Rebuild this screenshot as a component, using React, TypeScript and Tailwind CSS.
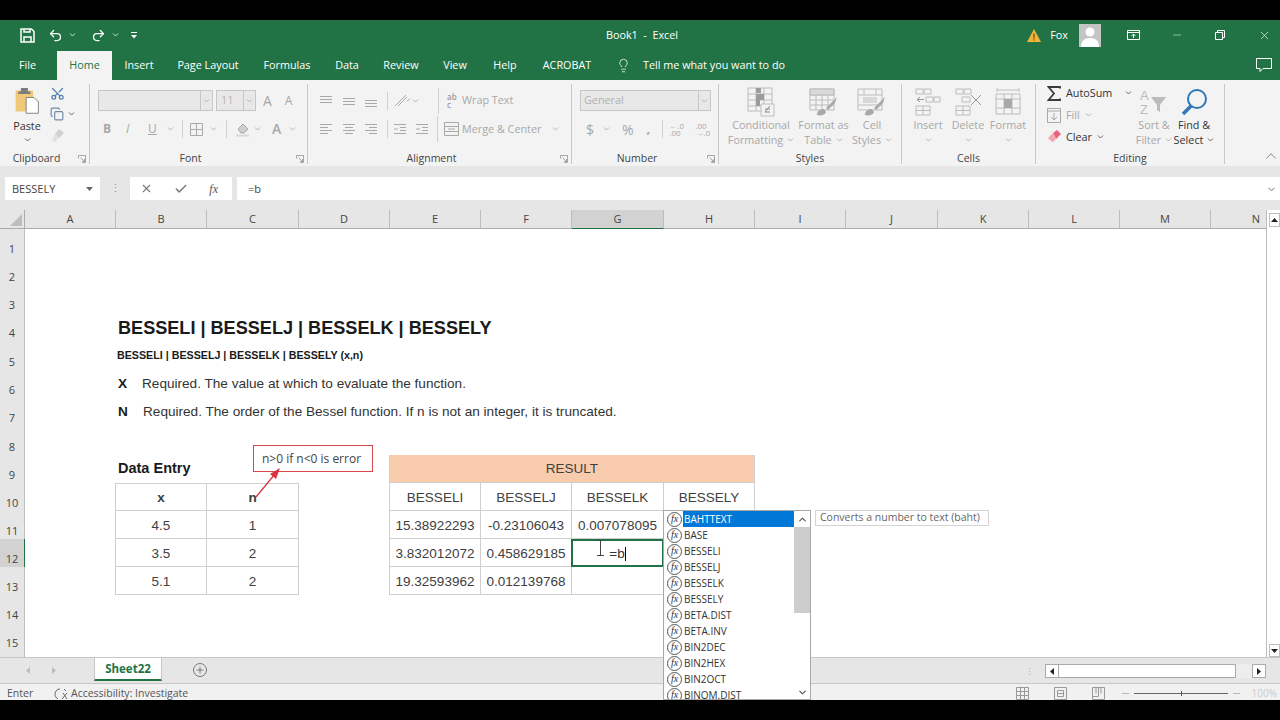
import type { ReactNode } from 'react';
import { Check, ChevronDown, ChevronUp, Copy, Lightbulb, Minus, Plus, Redo2, Scissors, Undo2, X } from 'lucide-react';

const columns = ['A', 'B', 'C', 'D', 'E', 'F', 'G', 'H', 'I', 'J', 'K', 'L', 'M', 'N'];
const functions = ['BAHTTEXT', 'BASE', 'BESSELI', 'BESSELJ', 'BESSELK', 'BESSELY', 'BETA.DIST', 'BETA.INV', 'BIN2DEC', 'BIN2HEX', 'BIN2OCT', 'BINOM.DIST'];
const ui = "font-['Open_Sans',sans-serif]";
const sheetFont = "font-['Liberation_Sans',sans-serif]";

function Caret({ className = 'text-[#b4b4b4]' }: { className?: string }) {
  return (
    <svg width="7" height="4" viewBox="0 0 7 4" className={className} fill="none" stroke="currentColor">
      <path d="M1 .5 3.500 3 6 .5" />
    </svg>
  );
}

function Group({ label, width, launcher, children }: { label: string; width: string; launcher?: boolean; children: ReactNode }) {
  return (
    <div className={`${width} flex h-[80px] flex-col border-r border-[#c8c8c8]`}>
      <div className="flex h-[68px] min-h-0">{children}</div>
      <div className={`relative flex flex-1 items-center justify-center text-[10.500px] leading-none text-[#444] ${launcher ? 'pr-4' : ''}`}>
        {label}
        {launcher && (
          <svg width="8" height="8" viewBox="0 0 9 9" className="absolute right-[3px] top-[3px] text-[#999]" fill="none" stroke="currentColor">
            <path d="M.5 4V.5H8.500V8.500H5M3 3 7.500 7.500M7.500 4.500V7.500H4.500" />
          </svg>
        )}
      </div>
    </div>
  );
}

function LargeButton({ lines, width, dim = true, children }: { lines: ReactNode[]; width: string; dim?: boolean; children: ReactNode }) {
  return (
    <div className={`${width} flex flex-col items-center text-[10.800px] leading-[15px] ${dim ? 'text-[#a8a8a8]' : 'text-[#333]'}`}>
      <div className="flex h-[31px] items-center">{children}</div>
      {lines.map((line, i) => (
        <div key={i} className="flex h-[15px] items-center gap-1 whitespace-nowrap">
          {line}
        </div>
      ))}
    </div>
  );
}

function Lines({ rows }: { rows: string[] }) {
  return (
    <svg width="14" height="12" viewBox="0 0 14 12" fill="none" stroke="#a9a9a9">
      {rows.map((d) => (
        <path key={d} d={d} />
      ))}
    </svg>
  );
}

function CellsIcon({ children }: { children: ReactNode }) {
  return (
    <svg width="28" height="30" viewBox="0 0 28 30" fill="none" stroke="#bcbcbc">
      {children}
    </svg>
  );
}

function Ribbon() {
  return (
    <div className={`${ui} flex h-[86px] bg-[#f3f3f3] pt-1`}>
      <Group label="Clipboard" width="w-[90px]" launcher>
        <div className="flex w-[50px] flex-col items-center pl-1 pt-[3px] text-[10.800px] leading-[15px] text-[#333]">
          <svg width="26" height="28" viewBox="0 0 28 32">
            <path d="M1 4h20v24H1z" fill="#efc878" />
            <path d="M7 1h8v4h3v3H4V5h3z" fill="#7c7c7c" />
            <path d="M13 12h9l5 5v13H13z" fill="#fff" stroke="#777" />
          </svg>
          <span className="mt-[3px]">Paste</span>
          <Caret className="mt-[5px] text-[#666]" />
        </div>
        <div className="flex flex-col gap-[6px] pt-[2px]">
          <Scissors size={15} className="-rotate-90 text-[#4f7fae]" />
          <div className="flex items-center gap-1">
            <Copy size={14} className="text-[#6f8ba6]" />
            <Caret className="text-[#666]" />
          </div>
          <svg width="16" height="16" viewBox="0 0 16 16">
            <path d="M9 2l5 4-5 5-4-4z" fill="#d0d0d0" />
            <path d="M5 7l4 4-4 4-3-2z" fill="#e0e0e0" />
          </svg>
        </div>
      </Group>

      <Group label="Font" width="w-[218px]" launcher>
        <div className="flex flex-col pl-2 pt-[6px]">
          <div className="flex items-center gap-[3px]">
            <div className="flex h-[21px] w-[115px] justify-end border border-[#c6c6c6] bg-[#e8e8e8]">
              <div className="flex w-3 items-center justify-center border-l border-[#c6c6c6]">
                <Caret />
              </div>
            </div>
            <div className="flex h-[21px] w-10 items-center justify-between border border-[#c6c6c6] bg-[#e8e8e8] pl-1 text-[11px] text-[#b5b5b5]">
              11
              <div className="flex h-full w-3 items-center justify-center border-l border-[#c6c6c6]">
                <Caret />
              </div>
            </div>
            <span className="ml-[4px] text-[14px] leading-none text-[#a5a5a5]">A</span>
            <span className="ml-[10px] text-[12px] leading-none text-[#a5a5a5]">A</span>
          </div>
          <div className="mt-[8px] flex h-[20px] items-center text-[12px] text-[#a8a8a8]">
            <span className="ml-[5px] w-[23px] font-bold">B</span>
            <span className="w-[22px] italic">I</span>
            <span className="w-[19px] underline">U</span>
            <Caret />
            <div className="ml-[8px] mr-[7px] h-[18px] w-px bg-[#d0d0d0]" />
            <svg width="13" height="13" viewBox="0 0 13 13" fill="none" stroke="#aaa">
              <path d="M.5.500h12v12H.5zM6.500.500v12M.5 6.500h12" />
            </svg>
            <Caret className="ml-[7px] text-[#b4b4b4]" />
            <div className="ml-[9px] mr-[8px] h-[18px] w-px bg-[#d0d0d0]" />
            <svg width="16" height="15" viewBox="0 0 16 15">
              <path d="M3 7l5-5 5 5-4 4H6z" fill="#cfcfcf" stroke="#a9a9a9" />
              <path d="M1 13.500h13" stroke="#d9d9d9" strokeWidth="2" />
            </svg>
            <Caret className="ml-[3px] text-[#b4b4b4]" />
            <span className="ml-[11px] text-[14px] font-semibold leading-none">A</span>
            <Caret className="ml-[8px] text-[#b4b4b4]" />
          </div>
        </div>
      </Group>

      <Group label="Alignment" width="w-[264px]" launcher>
        <div className="flex flex-col pl-[7px] pt-[6px]">
          <div className="flex h-[21px] items-center">
            <div className="flex w-[22px] justify-center"><Lines rows={['M1 1.500h12M1 4.500h12M1 7.500h12']} /></div>
            <div className="flex w-[23px] justify-center"><Lines rows={['M1 3.500h12M1 6.500h12M1 9.500h12']} /></div>
            <div className="flex w-[22px] justify-center"><Lines rows={['M1 5.500h12M1 8.500h12M1 11.500h12']} /></div>
            <div className="mx-[5px] h-[18px] w-px bg-[#d0d0d0]" />
            <svg width="18" height="16" viewBox="0 0 18 16" fill="none" stroke="#a9a9a9">
              <path d="M2 13 13 2M5 13l9-9M14 8l3-2" />
            </svg>
            <Caret className="ml-[1px] text-[#b4b4b4]" />
            <div className="ml-[19px] mr-2 h-[26px] w-px bg-[#d0d0d0]" />
            <span className="flex items-center gap-[3px] text-[10.800px] text-[#a8a8a8]">
              <span className="w-[12px] text-[8px] font-semibold leading-[8px] text-[#9a9a9a]">ab c</span>
              Wrap Text
            </span>
          </div>
          <div className="mt-[8px] flex h-[20px] items-center">
            <div className="flex w-[22px] justify-center"><Lines rows={['M1 1.500h12M1 4.500h8M1 7.500h12M1 10.500h8']} /></div>
            <div className="flex w-[23px] justify-center"><Lines rows={['M1 1.500h12M3 4.500h8M1 7.500h12M3 10.500h8']} /></div>
            <div className="flex w-[22px] justify-center"><Lines rows={['M1 1.500h12M5 4.500h8M1 7.500h12M5 10.500h8']} /></div>
            <div className="mx-[5px] h-[18px] w-px bg-[#d0d0d0]" />
            <div className="flex gap-2">
              <Lines rows={['M1 1.500h12M7 4.500h6M7 7.500h6M1 10.500h12M1 6h4']} />
              <Lines rows={['M1 1.500h12M7 4.500h6M7 7.500h6M1 10.500h12M5 6H1']} />
            </div>
            <div className="ml-[8px] mr-[6px] h-[26px] w-px bg-[#d0d0d0]" />
            <span className="flex items-center gap-[3px] whitespace-nowrap text-[10.800px] text-[#a8a8a8]">
              <svg width="15" height="14" viewBox="0 0 15 14" fill="none" stroke="#a9a9a9">
                <path d="M.5.500h14v13H.5zM.5 4.500h14M.5 9.500h14M4 7h7" />
              </svg>
              Merge &amp; Center
              <Caret className="ml-2 text-[#b4b4b4]" />
            </span>
          </div>
        </div>
      </Group>

      <Group label="Number" width="w-[147px]" launcher>
        <div className="flex flex-col pl-2 pt-[6px]">
          <div className="flex h-[21px] w-[131px] items-center justify-between border border-[#c6c6c6] bg-[#e8e8e8] pl-[3px] text-[10.800px] text-[#b0b0b0]">
            General
            <div className="flex h-full w-3 items-center justify-center border-l border-[#c6c6c6]">
              <Caret />
            </div>
          </div>
          <div className="mt-[8px] flex h-[20px] items-center text-[#a8a8a8]">
            <span className="ml-[6px] text-[14px]">$</span>
            <Caret className="ml-[9px] text-[#b4b4b4]" />
            <span className="ml-[12px] text-[14px]">%</span>
            <span className="ml-[13px] text-[13px] font-bold">,</span>
            <div className="ml-[12px] mr-[6px] h-[18px] w-px bg-[#d0d0d0]" />
            <span className="w-[16px] text-[8px] leading-[7px]">←.0 .00</span>
            <span className="ml-[10px] w-[14px] text-[8px] leading-[7px]">.00 →.0</span>
          </div>
        </div>
      </Group>

      <Group label="Styles" width="w-[183px]">
        <div className="flex pl-[10px] pt-[2px]">
          <LargeButton width="w-[64px]" lines={['Conditional', <>Formatting <Caret /></>]}>
            <svg width="28" height="30" viewBox="0 0 28 30" fill="none" stroke="#bcbcbc">
              <path d="M1 1h24v23H1zM1 7h24M1 13h24M1 19h24M9 1v23M17 1v23" />
              <path d="M9 1h5v5H9zM9 7h8v6H9zM9 13h4v6H9z" fill="#9c9c9c" stroke="none" />
              <path d="M14 17h13v12H14z" fill="#f3f3f3" />
              <path d="M18 25l5-6M18 22h5M18 25h5" stroke="#888" />
            </svg>
          </LargeButton>
          <LargeButton width="w-[61px]" lines={['Format as', <>Table <Caret /></>]}>
            <svg width="30" height="30" viewBox="0 0 30 30" fill="none" stroke="#bcbcbc">
              <path d="M1 2h24v21H1zM1 8h24M1 13h24M1 18h24M7 2v21M13 2v21M19 2v21" />
              <path d="M1 2h24v6H1z" fill="#d8d8d8" />
              <path d="M8 28c0-4 3-6 7-6l2 3c-1 3-5 4-9 3zM17 21l11-11-2 6-7 7z" fill="#a8a8a8" stroke="none" />
            </svg>
          </LargeButton>
          <LargeButton width="w-[36px]" lines={['Cell', <>Styles <Caret /></>]}>
            <svg width="30" height="30" viewBox="0 0 30 30" fill="none" stroke="#bcbcbc">
              <path d="M1 2h24v21H1zM1 8h24M1 18h24M7 2v6M19 2v6" />
              <path d="M6 10h14v6H6z" fill="#d8d8d8" stroke="none" />
              <path d="M8 28c0-4 3-6 7-6l2 3c-1 3-5 4-9 3zM17 21l11-11-2 6-7 7z" fill="#a8a8a8" stroke="none" />
            </svg>
          </LargeButton>
        </div>
      </Group>

      <Group label="Cells" width="w-[134px]">
        <div className="flex pl-[6px] pt-[2px]">
          <LargeButton width="w-[40px]" lines={['Insert', <Caret />]}>
            <CellsIcon>
              <path d="M2 2h7v5H2zM10 2h7v5h-7zM12 10h7v5h-7zM20 10h6v5h-6zM2 19h14v9H2zM9 19v9M2 23.500h14" />
              <path d="M10 12.500H3M6 10l-3 2.500L6 15" stroke="#999" />
            </CellsIcon>
          </LargeButton>
          <LargeButton width="w-[40px]" lines={['Delete', <Caret />]}>
            <CellsIcon>
              <path d="M2 2h7v5H2zM10 2h7v5h-7zM8 10h8v5H8zM2 19h14v9H2zM9 19v9M2 23.500h14" />
              <path d="m17 8 10 10M27 8 17 18" stroke="#999" />
            </CellsIcon>
          </LargeButton>
          <LargeButton width="w-[40px]" lines={['Format', <Caret />]}>
            <CellsIcon>
              <path d="M2 7h24v20H2zM2 12h24M2 21h24M10 7v20M18 7v20M3 3h22M3 1v4M25 1v4" />
              <path d="M10 12h8v9h-8z" fill="#a8a8a8" stroke="none" />
            </CellsIcon>
          </LargeButton>
        </div>
      </Group>

      <Group label="Editing" width="w-[189px]">
        <div className="flex pl-[11px] pt-[2px]">
          <div className="-mt-[4px] flex w-[92px] flex-col text-[10.800px] leading-none">
            <div className="flex h-[22px] items-center gap-[5px] text-[#333]">
              <svg width="14" height="15" viewBox="0 0 14 15" fill="none" stroke="#3a3a3a" strokeWidth="1.800">
                <path d="M13 2.500V1H1.500l5.500 6.500L1.500 14H13v-1.500" />
              </svg>
              AutoSum
              <Caret className="ml-2 text-[#666]" />
            </div>
            <div className="flex h-[22px] items-center gap-[5px] text-[#a8a8a8]">
              <svg width="14" height="15" viewBox="0 0 14 15" fill="none" stroke="#a9a9a9">
                <path d="M.5.500h13v14H.5zM.5 3h13M7 5v7M4 9l3 3 3-3" />
              </svg>
              Fill <Caret />
            </div>
            <div className="flex h-[22px] items-center gap-[5px] text-[#333]">
              <svg width="14" height="14" viewBox="0 0 14 14">
                <path d="M6 3 10 0l4 4-5 5z" fill="#e8657f" />
                <path d="M6 3 9 9l-3 3-2-1-3-3z" fill="#f3a8b6" />
              </svg>
              Clear <Caret className="text-[#666]" />
            </div>
          </div>
          <div className="-ml-[5px] w-[40px]">
            <LargeButton width="w-[40px]" lines={['Sort &', <>Filter <Caret /></>]}>
              <svg width="30" height="28" viewBox="0 0 30 28" fill="#bcbcbc">
                <text x="1" y="12" fontSize="13" fontFamily="Liberation Sans">A</text>
                <text x="1" y="26" fontSize="13" fontFamily="Liberation Sans">Z</text>
                <path d="M12 9h15l-6 8v7l-3-2v-5z" />
              </svg>
            </LargeButton>
          </div>
          <LargeButton width="w-[40px]" dim={false} lines={['Find &', <>Select <Caret className="text-[#666]" /></>]}>
            <svg width="28" height="28" viewBox="0 0 28 28" fill="none">
              <circle cx="17" cy="11" r="9" stroke="#2f78b7" strokeWidth="2" />
              <path d="M11 18 3 26" stroke="#2f78b7" strokeWidth="3.500" />
            </svg>
          </LargeButton>
        </div>
      </Group>

      <div className="flex flex-1 items-end justify-end pb-[1px]">
        <ChevronUp size={18} strokeWidth={1} className="text-[#666]" />
      </div>
    </div>
  );
}

function Header() {
  const tabs: [string, string][] = [
    ['Insert', 'w-[54px]'],
    ['Page Layout', 'w-[84px]'],
    ['Formulas', 'w-[74px]'],
    ['Data', 'w-[46px]'],
    ['Review', 'w-[62px]'],
    ['View', 'w-[46px]'],
    ['Help', 'w-[54px]'],
    ['ACROBAT', 'w-[70px]'],
  ];
  return (
    <div className={`${ui} bg-[#217346] text-white`}>
      <div className="grid h-[30px] grid-cols-[1fr_auto_1fr] items-center text-[10.800px]">
        <div className="flex items-center pl-5">
          <svg width="15" height="15" viewBox="0 0 15 15" fill="none" stroke="#fff" strokeWidth="1.500">
            <path d="M1 1h10.500L14 3.500V14H1zM4 14V9h7v5M4 1v3h6V1" />
          </svg>
          <Undo2 size={15} className="ml-[13px]" />
          <Caret className="ml-[6px] text-[#cfe3d8]" />
          <Redo2 size={15} className="ml-[15px]" />
          <Caret className="ml-[6px] text-[#cfe3d8]" />
          <svg width="6" height="7" viewBox="0 0 6 7" fill="#fff" className="ml-[12px]">
            <path d="M0 0h6v1H0zM0 3h6L3 6.500z" />
          </svg>
        </div>
        <div className="whitespace-pre pl-1">Book1  -  Excel</div>
        <div className="flex items-center justify-end">
          <svg width="14" height="13" viewBox="0 0 14 13" className="mr-[9px]">
            <path d="M7 0l7 13H0z" fill="#f0b33c" />
            <path d="M6.400 4.500h1.200v5H6.400zM6.400 10.300h1.200v1.300H6.400z" fill="#6b4a0c" />
          </svg>
          <span>Fox</span>
          <svg width="22" height="23" viewBox="0 0 22 23" className="ml-[11px]">
            <path d="M0 0h22v23H0z" fill="#c4c4c4" />
            <circle cx="11" cy="8" r="4.500" fill="#fff" />
            <path d="M2 23c0-7 4-9 9-9s9 2 9 9z" fill="#fff" />
          </svg>
          <svg width="13" height="10" viewBox="0 0 13 10" fill="none" stroke="#fff" className="ml-[26px]">
            <path d="M.5.500h12v9H.5zM.5 2.500h12M6.500 8V4M4.500 6l2-2 2 2" />
          </svg>
          <Minus size={12} strokeWidth={1} className="ml-[31px]" />
          <svg width="10" height="10" viewBox="0 0 10 10" fill="none" stroke="#fff" className="ml-[32px]">
            <path d="M.5 2.500h7v7h-7zM2.500 2.500v-2h7v7h-2" />
          </svg>
          <X size={13} strokeWidth={1.200} className="ml-[33px] mr-[9px]" />
        </div>
      </div>
      <div className="flex h-[30px] items-center text-[10.800px]">
        <div className="flex h-full items-center">
          <div className="mr-[2px] flex w-[55px] justify-center">File</div>
          <div className="flex h-[29px] w-[55px] items-center justify-center self-end bg-[#f3f3f3] text-[#217346]">Home</div>
          {tabs.map(([name, width]) => (
            <div key={name} className={`${width} flex justify-center`}>
              {name}
            </div>
          ))}
        </div>
        <Lightbulb size={15} strokeWidth={1.200} className="ml-[14px]" />
        <span className="ml-[12px]">Tell me what you want to do</span>
        <svg width="16" height="14" viewBox="0 0 16 14" fill="none" stroke="#fff" className="ml-auto mr-2">
          <path d="M.5.500h15v10H7l-3 3v-3H.5z" />
        </svg>
      </div>
    </div>
  );
}

function FormulaBar() {
  return (
    <div className={`${ui} flex h-[44px] flex-col bg-[#e6e6e6] pt-[11px]`}>
      <div className="flex h-[23px] items-stretch text-[11px] text-[#444]">
        <div className="ml-[5px] flex w-[95px] items-center justify-between bg-white pl-[7px] pr-[7px] pt-[1px]">
          BESSELY
          <svg width="7" height="4" viewBox="0 0 7 4" fill="#666">
            <path d="M0 0h7L3.500 4z" />
          </svg>
        </div>
        <div className="flex w-[30px] items-center justify-center text-[#999]">⋮</div>
        <div className="flex w-[102px] items-center justify-between bg-white pl-[10px] pr-[14px]">
          <X size={13} className="text-[#777]" />
          <Check size={14} strokeWidth={2.500} className="text-[#777]" />
          <span className="font-['Liberation_Serif',serif] text-[12px] italic text-[#555]">fx</span>
        </div>
        <div className="ml-[5px] flex flex-1 items-center justify-between bg-white pl-[11px] pr-[3px] pt-[1px]">
          =b
          <ChevronDown size={11} strokeWidth={2} className="text-[#666]" />
        </div>
      </div>
    </div>
  );
}

function Blank({ count }: { count: number }) {
  return (
    <>
      {Array.from({ length: count }, (_, i) => (
        <div key={i} />
      ))}
    </>
  );
}

function RowLabel({ n }: { n?: number }) {
  const active = n === 12;
  return (
    <div className={`${ui} flex items-end justify-center overflow-hidden border-r pb-[1px] text-[11px] leading-[15px] text-[#444] ${active ? 'border-[#217346] bg-[#d2d2d2]' : 'border-[#bdbdbd] bg-[#e6e6e6]'}`}>
      {n}
    </div>
  );
}

function Cell({ children, className = 'pt-[3px]' }: { children?: ReactNode; className?: string }) {
  return <div className={`flex items-center justify-center border-b border-r border-[#cfcfcf] text-[13.500px] text-[#404040] ${className}`}>{children}</div>;
}

function TextCell({ children, className = '' }: { children: ReactNode; className?: string }) {
  return <div className={`flex items-center whitespace-nowrap text-[#1a1a1a] ${className}`}>{children}</div>;
}

function Sheet() {
  const first = '-ml-px border-l pt-[3px]';
  return (
    <div className={`${sheetFont} grid h-[447px] w-[1266px] grid-cols-[25px_91px_91px_92px_91px_91px_91px_92px_91px_91px_92px_91px_91px_91px_91px] grid-rows-[19px_28px_28px_28px_28px_29px_28px_28px_29px_repeat(7,28px)_6px] overflow-hidden bg-white`}>
      <div className="flex items-end justify-end border-b border-r border-[#ababab] bg-[#e6e6e6]">
        <svg width="12" height="12" viewBox="0 0 12 12" fill="#bdbdbd" className="mb-[2px] mr-[2px]">
          <path d="M12 0v12H0z" />
        </svg>
      </div>
      {columns.map((c) => (
        <div
          key={c}
          className={`${ui} flex items-center justify-center border-b border-r text-[11px] text-[#444] ${c === 'G' ? 'border-b-[#217346] border-r-[#bdbdbd] bg-[#d2d2d2]' : 'border-b-[#ababab] border-r-[#bdbdbd] bg-[#e6e6e6]'}`}
        >
          {c}
        </div>
      ))}

      {[1, 2, 3].map((n) => (
        <div key={n} className="contents">
          <RowLabel n={n} />
          <Blank count={14} />
        </div>
      ))}

      <RowLabel n={4} />
      <Blank count={1} />
      <TextCell className="pl-[2px] pt-[3px] text-[18.100px] font-bold">BESSELI | BESSELJ | BESSELK | BESSELY</TextCell>
      <Blank count={12} />

      <RowLabel n={5} />
      <Blank count={1} />
      <TextCell className="pl-[1px] text-[10.700px] font-bold">BESSELI | BESSELJ | BESSELK | BESSELY (x,n)</TextCell>
      <Blank count={12} />

      <RowLabel n={6} />
      <Blank count={1} />
      <TextCell className="pl-[2px] pt-[1px] text-[13.600px]">
        <b className="w-[24px] shrink-0">X</b>
        <span className="text-[#333]">Required. The value at which to evaluate the function.</span>
      </TextCell>
      <Blank count={12} />

      <RowLabel n={7} />
      <Blank count={1} />
      <TextCell className="pl-[2px] pt-[1px] text-[13.600px]">
        <b className="w-[25px] shrink-0">N</b>
        <span className="text-[#333]">Required. The order of the Bessel function. If n is not an integer, it is truncated.</span>
      </TextCell>
      <Blank count={12} />

      <RowLabel n={8} />
      <Blank count={14} />

      <RowLabel n={9} />
      <Blank count={1} />
      <TextCell className="pl-[2px] text-[14.500px] font-bold">Data Entry</TextCell>
      <Blank count={2} />
      <Cell className="col-span-4 -ml-px border-l bg-[#f8cbad] pt-[1px]">RESULT</Cell>
      <Blank count={6} />

      <RowLabel n={10} />
      <Blank count={1} />
      <Cell className={`${first} border-t font-bold text-[#1a1a1a]`}>x</Cell>
      <Cell className="border-t pt-[3px] font-bold text-[#1a1a1a]">n</Cell>
      <Blank count={1} />
      <Cell className={first}>BESSELI</Cell>
      <Cell>BESSELJ</Cell>
      <Cell>BESSELK</Cell>
      <Cell>BESSELY</Cell>
      <Blank count={6} />

      <RowLabel n={11} />
      <Blank count={1} />
      <Cell className={first}>4.5</Cell>
      <Cell>1</Cell>
      <Blank count={1} />
      <Cell className={first}>15.38922293</Cell>
      <Cell>-0.23106043</Cell>
      <Cell>0.007078095</Cell>
      <Cell />
      <Blank count={6} />

      <RowLabel n={12} />
      <Blank count={1} />
      <Cell className={first}>3.5</Cell>
      <Cell>2</Cell>
      <Blank count={1} />
      <Cell className={first}>3.832012072</Cell>
      <Cell>0.458629185</Cell>
      <div className="-ml-px flex items-center justify-center border-2 border-[#217346] pt-[2px] text-[13.500px] text-[#333]">
        =b
        <span className="h-[14px] w-px bg-black" />
      </div>
      <Cell />
      <Blank count={6} />

      <RowLabel n={13} />
      <Blank count={1} />
      <Cell className={first}>5.1</Cell>
      <Cell>2</Cell>
      <Blank count={1} />
      <Cell className={first}>19.32593962</Cell>
      <Cell>0.012139768</Cell>
      <Cell />
      <Cell />
      <Blank count={6} />

      {[14, 15].map((n) => (
        <div key={n} className="contents">
          <RowLabel n={n} />
          <Blank count={14} />
        </div>
      ))}
      <RowLabel />
      <Blank count={14} />
    </div>
  );
}

function VerticalScroll() {
  return (
    <div className="flex h-[447px] w-[14px] flex-col border-l border-[#bdbdbd] bg-white pl-[2px] pt-[3px]">
      <div className="flex h-[14px] items-center justify-center border border-[#bdbdbd]">
        <svg width="7" height="4" viewBox="0 0 7 4" fill="#222"><path d="M3.500 0 7 4H0z" /></svg>
      </div>
      <div className="flex-1" />
      <div className="flex h-[13px] items-center justify-center border border-[#bdbdbd]">
        <svg width="7" height="4" viewBox="0 0 7 4" fill="#222"><path d="M0 0h7L3.500 4z" /></svg>
      </div>
    </div>
  );
}

function SheetTabs() {
  return (
    <div className={`${ui} flex h-[27px] items-start border-y border-[#c6c6c6] bg-[#e6e6e6] text-[#bcbcbc]`}>
      <div className="flex h-[25px] w-[94px] items-center gap-[22px] pl-[26px]">
        <svg width="4" height="7" viewBox="0 0 4 7" fill="currentColor"><path d="M4 0v7L0 3.500z" /></svg>
        <svg width="4" height="7" viewBox="0 0 4 7" fill="currentColor"><path d="M0 0v7l4-3.500z" /></svg>
      </div>
      <div className="flex h-[23px] w-[68px] items-center justify-center border-x border-b-2 border-x-[#c6c6c6] border-b-[#217346] bg-white pt-[1px] text-[11.500px] font-bold text-[#217346]">Sheet22</div>
      <div className="ml-[31px] mt-[5px] flex h-[14px] w-[14px] items-center justify-center rounded-full border border-[#777]">
        <Plus size={10} className="text-[#666]" />
      </div>
      <div className="ml-auto mt-[6px] flex items-center pr-[14px]">
        <span className="mr-[11px] text-[9px] leading-none text-[#aaa]">⋮</span>
        <div className="flex h-[14px] w-[14px] items-center justify-center border border-[#aaa] bg-white">
          <svg width="4" height="7" viewBox="0 0 4 7" fill="#222"><path d="M4 0v7L0 3.500z" /></svg>
        </div>
        <div className="h-[14px] w-[177px] border-y border-r border-[#aaa] bg-white" />
        <div className="h-[14px] w-[16px] bg-[#ededed]" />
        <div className="flex h-[14px] w-[14px] items-center justify-center border border-[#aaa] bg-white">
          <svg width="4" height="7" viewBox="0 0 4 7" fill="#222"><path d="M0 0v7l4-3.500z" /></svg>
        </div>
      </div>
    </div>
  );
}

function StatusBar() {
  return (
    <div className={`${ui} flex h-[16px] items-center bg-[#f1f1f1] pl-[7px] pt-[3px] text-[10.500px] text-[#555]`}>
      <span className="w-[46px]">Enter</span>
      <svg width="15" height="14" viewBox="0 0 15 14" fill="none" stroke="#666">
        <path d="M7 2a5 5 0 0 0-5 5c0 2 1 4 3 5M10 6l4 6M14 6l-5 6M11 2l2 2" />
      </svg>
      <span className="ml-[3px]">Accessibility: Investigate</span>
      <div className="ml-auto flex items-center">
        <svg width="13" height="13" viewBox="0 0 13 13" fill="none" stroke="#999">
          <path d="M.5.500h12v12H.5zM4.500.500v12M8.500.500v12M.5 4.500h12M.5 8.500h12" />
        </svg>
        <svg width="13" height="13" viewBox="0 0 13 13" fill="none" stroke="#999" className="ml-[25px]">
          <path d="M.5.500h12v12H.5zM3.500 3.500h6v6h-6zM4 6.500h5" />
        </svg>
        <svg width="13" height="13" viewBox="0 0 13 13" fill="none" stroke="#999" className="ml-[25px]">
          <path d="M.5.500h12v12H.5zM.5 9.500h6v-9M4 .500v6M9 .500v6" />
        </svg>
        <div className="ml-[17px] h-px w-[7px] bg-[#bbb]" />
        <div className="relative ml-[5px] h-px w-[94px] bg-[#666]">
          <div className="absolute left-[47px] top-[-2px] h-[5px] w-px bg-[#555]" />
        </div>
        <div className="ml-[5px] h-px w-[7px] bg-[#bbb]" />
        <span className="ml-[12px] mr-[3px] text-[10px] text-[#ccc]">100%</span>
      </div>
    </div>
  );
}

function Autocomplete() {
  return (
    <>
      <div className={`${ui} absolute left-[663px] top-[510px] flex h-[190px] w-[148px] overflow-hidden border border-[#a8a8a8] bg-white text-[10px] text-[#333]`}>
        <div className="flex-1">
          {functions.map((name, i) => (
            <div key={name} className="flex h-[16px] items-center">
              <span className="ml-[3px] flex h-[15px] w-[15px] shrink-0 items-center justify-center rounded-full border border-[#555] font-['Liberation_Serif',serif] text-[10px] italic leading-none text-[#333]">fx</span>
              <span className={`ml-[1px] flex h-[16px] flex-1 items-center pl-[1px] ${i === 0 ? 'bg-[#0078d7] text-white' : ''}`}>{name}</span>
            </div>
          ))}
        </div>
        <div className="flex w-[16px] flex-col bg-white">
          <div className="flex h-[16px] items-center justify-center">
            <ChevronUp size={11} strokeWidth={2.500} className="text-[#555]" />
          </div>
          <div className="h-[86px] bg-[#cdcdcd]" />
          <div className="flex-1" />
          <div className="flex h-[14px] items-center justify-center">
            <ChevronDown size={11} strokeWidth={2.500} className="text-[#555]" />
          </div>
        </div>
      </div>
      <div className={`${ui} absolute left-[815px] top-[510px] flex h-[16px] w-[174px] items-center border border-[#d4d4d4] bg-white pl-[4px] text-[10.500px] text-[#666]`}>
        Converts a number to text (baht)
      </div>
    </>
  );
}

export default function App() {
  return (
    <div className="relative h-[720px] w-[1280px] overflow-hidden bg-black pt-5">
      <Header />
      <Ribbon />
      <FormulaBar />
      <div className="flex">
        <Sheet />
        <VerticalScroll />
      </div>
      <SheetTabs />
      <StatusBar />

      <div className={`${ui} absolute left-[253px] top-[445px] flex h-[27px] w-[120px] items-center justify-center border border-[#d8464f] bg-white pr-[3px] text-[12px] text-[#444]`}>
        n&gt;0 if n&lt;0 is error
      </div>
      <svg width="40" height="40" viewBox="0 0 40 40" className="absolute left-[250px] top-[463px]">
        <path d="M6 34 25 11" stroke="#d8343f" strokeWidth="1.200" />
        <path d="M30 5 20 11l6 5z" fill="#d8343f" />
      </svg>

      <Autocomplete />

      <svg width="9" height="16" viewBox="0 0 9 16" fill="none" stroke="#444" className="absolute left-[596px] top-[540px]">
        <path d="M1 .5h7M4.500.5v15M1 15.500h7" />
      </svg>
    </div>
  );
}
